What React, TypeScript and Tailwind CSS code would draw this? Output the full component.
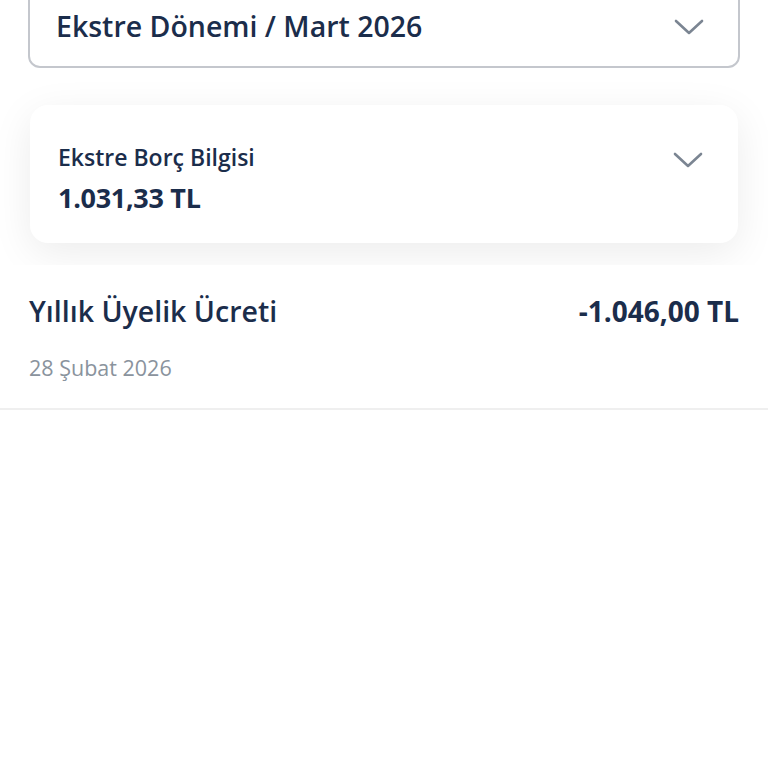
const font = { fontFamily: '"Open Sans", "Noto Sans", sans-serif' };

function Chevron() {
  return (
    <svg width="32" height="18" viewBox="0 0 32 18" fill="none" className="shrink-0">
      <path d="M3 3 L16 15 L29 3" stroke="#7b8592" strokeWidth="2.6" strokeLinecap="round" strokeLinejoin="round" />
    </svg>
  );
}

export default function App() {
  return (
    <div className="min-h-[768px] w-full bg-white overflow-hidden text-[#1b2d4b]" style={font}>
      {/* Period selector */}
      <div className="px-7">
        <div className="-mt-[20px] h-[88px] rounded-[12px] border-2 border-[#c4c7cd] bg-white flex items-center justify-between pl-[26px] pr-[33px]">
          <span className="text-[28.5px] leading-[38px] font-semibold pt-[4px]">Ekstre Dönemi / Mart 2026</span>
          <div className="pt-[6px]">
            <Chevron />
          </div>
        </div>
      </div>

      {/* Statement debt card */}
      <div className="px-[30px] pt-[37px]">
        <div className="h-[138px] rounded-[18px] bg-white shadow-[0_10px_40px_rgba(0,0,0,0.08)] flex items-start justify-between pl-[28px] pr-[34px] pt-[37px]">
          <div className="flex flex-col">
            <span className="text-[23px] leading-[30px] font-semibold">Ekstre Borç Bilgisi</span>
            <span className="text-[27px] leading-[36px] font-bold tracking-[-0.3px] mt-[8px]">1.031,33 TL</span>
          </div>
          <div className="pt-[9px]">
            <Chevron />
          </div>
        </div>
      </div>

      {/* Transaction row */}
      <div className="relative z-10 mt-[22px] bg-white border-b-2 border-[#efefef]">
        <div className="px-[29px] pt-[26px] pb-[25px]">
          <div className="flex items-center justify-between">
            <span className="text-[28.5px] leading-[40px] font-semibold">Yıllık Üyelik Ücreti</span>
            <span className="text-[28px] leading-[40px] font-bold">-1.046,00 TL</span>
          </div>
          <div className="text-[21.5px] leading-[30px] text-[#8a939d] mt-[22px]">28 Şubat 2026</div>
        </div>
      </div>
    </div>
  );
}
